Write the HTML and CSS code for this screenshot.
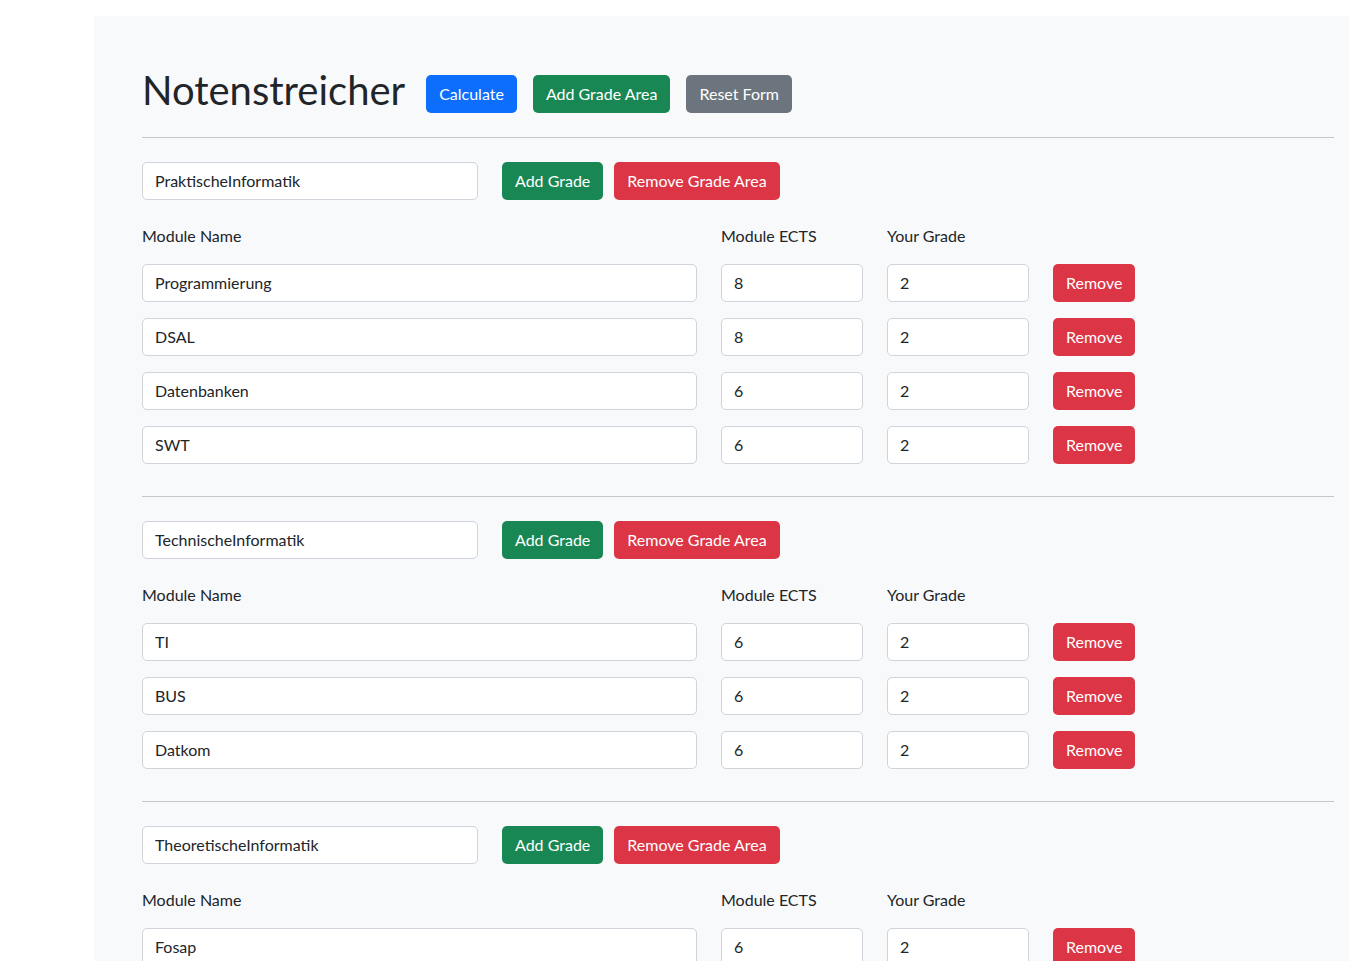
FILE: index.html
```html
<!DOCTYPE html>
<html lang="de">
<head>
<meta charset="UTF-8">
<title>Notenstreicher</title>
<link rel="stylesheet" href="styles.css">
</head>
<body>

<div class="page">
<main class="sheet">

<header class="title-bar">
  <h1>Notenstreicher</h1>
  <button class="btn btn-blue">Calculate</button>
  <button class="btn btn-green">Add Grade Area</button>
  <button class="btn btn-grey">Reset Form</button>
</header>

<hr>

<section class="area">
  <div class="area-head">
    <input class="field area-name" type="text" value="PraktischeInformatik">
    <button class="btn btn-green">Add Grade</button>
    <button class="btn btn-red">Remove Grade Area</button>
  </div>
  <div class="grades">
    <label>Module Name</label><label>Module ECTS</label><label>Your Grade</label><span></span>
    <input class="field" type="text" value="Programmierung"><input class="field" type="text" value="8"><input class="field" type="text" value="2"><button class="btn btn-red">Remove</button>
    <input class="field" type="text" value="DSAL"><input class="field" type="text" value="8"><input class="field" type="text" value="2"><button class="btn btn-red">Remove</button>
    <input class="field" type="text" value="Datenbanken"><input class="field" type="text" value="6"><input class="field" type="text" value="2"><button class="btn btn-red">Remove</button>
    <input class="field" type="text" value="SWT"><input class="field" type="text" value="6"><input class="field" type="text" value="2"><button class="btn btn-red">Remove</button>
  </div>
</section>

<hr>

<section class="area">
  <div class="area-head">
    <input class="field area-name" type="text" value="TechnischeInformatik">
    <button class="btn btn-green">Add Grade</button>
    <button class="btn btn-red">Remove Grade Area</button>
  </div>
  <div class="grades">
    <label>Module Name</label><label>Module ECTS</label><label>Your Grade</label><span></span>
    <input class="field" type="text" value="TI"><input class="field" type="text" value="6"><input class="field" type="text" value="2"><button class="btn btn-red">Remove</button>
    <input class="field" type="text" value="BUS"><input class="field" type="text" value="6"><input class="field" type="text" value="2"><button class="btn btn-red">Remove</button>
    <input class="field" type="text" value="Datkom"><input class="field" type="text" value="6"><input class="field" type="text" value="2"><button class="btn btn-red">Remove</button>
  </div>
</section>

<hr>

<section class="area">
  <div class="area-head">
    <input class="field area-name" type="text" value="TheoretischeInformatik">
    <button class="btn btn-green">Add Grade</button>
    <button class="btn btn-red">Remove Grade Area</button>
  </div>
  <div class="grades">
    <label>Module Name</label><label>Module ECTS</label><label>Your Grade</label><span></span>
    <input class="field" type="text" value="Fosap"><input class="field" type="text" value="6"><input class="field" type="text" value="2"><button class="btn btn-red">Remove</button>
    <input class="field" type="text" value="Logik"><input class="field" type="text" value="6"><input class="field" type="text" value="2"><button class="btn btn-red">Remove</button>
  </div>
</section>

</main>
</div>

</body>
</html>
```

FILE: styles.css
```css
body {
  margin: 0;
  padding: 0;
  background-color: #fff;
  color: #212529;
  font-family: Lato, "Open Sans", sans-serif;
  font-size: 16px;
  line-height: 1.5;
}

.page {
  overflow: hidden;
  height: 961px;
}

.sheet {
  margin: 16px 0 0 94px;
  width: 1192px;
  padding: 48px;
  background-color: #f8f9fa;
}

.title-bar {
  display: flex;
  align-items: flex-start;
  gap: 16px;
}

.title-bar h1 {
  margin: 3px 5px 0 0;
  font-size: 40px;
  font-weight: 400;
  line-height: 46px;
}

.title-bar .btn {
  margin-top: 11px;
}

hr {
  margin: 24px 0;
  border: 0;
  border-top: 1px solid #c6c7c8;
}

.area {
  padding-bottom: 8px;
}

.btn {
  font-family: inherit;
  font-size: 16px;
  line-height: 24px;
  padding: 6px 12px;
  border: 1px solid transparent;
  border-radius: 5px;
  color: #fff;
  cursor: pointer;
  white-space: nowrap;
}

.btn-blue { background-color: #0d6efd; }
.btn-green { background-color: #198754; }
.btn-grey { background-color: #6c757d; }
.btn-red { background-color: #dc3545; }

.field {
  box-sizing: border-box;
  height: 38px;
  padding: 5px 12px 7px;
  font-family: inherit;
  font-size: 16px;
  color: #212529;
  background-color: #fff;
  border: 1px solid #ced4da;
  border-radius: 5px;
}

.area-head {
  display: flex;
  align-items: center;
  gap: 11px;
}

.area-name {
  width: 336px;
  margin-right: 13px;
}

.grades {
  display: grid;
  grid-template-columns: 555px 142px 142px auto;
  justify-content: start;
  justify-items: start;
  column-gap: 24px;
  row-gap: 16px;
  margin-top: 24px;
}

.grades .field {
  width: 100%;
}

.grades label {
  line-height: 24px;
}
```
